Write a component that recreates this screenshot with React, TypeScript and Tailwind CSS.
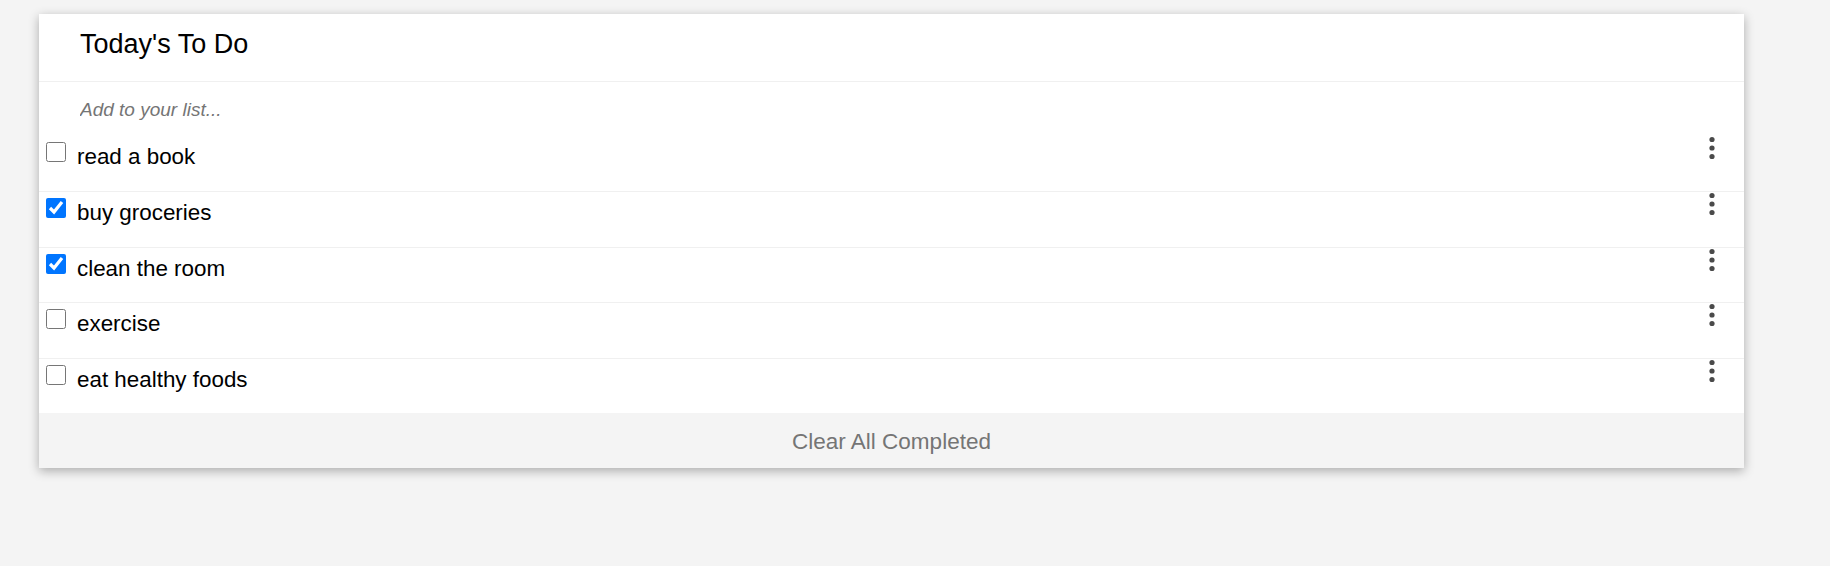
import React from 'react';

interface Todo {
  text: string;
  done: boolean;
  h: string;
}

const todos: Todo[] = [
  { text: 'read a book', done: false, h: 'h-[56px]' },
  { text: 'buy groceries', done: true, h: 'h-[56px]' },
  { text: 'clean the room', done: true, h: 'h-[55px]' },
  { text: 'exercise', done: false, h: 'h-[56px]' },
  { text: 'eat healthy foods', done: false, h: 'h-[54px]' },
];

const MoreIcon = () => (
  <svg width="6" height="24" viewBox="0 0 6 24" className="shrink-0">
    <circle cx="3" cy="3.5" r="2.6" fill="#4a4a4a" />
    <circle cx="3" cy="12" r="2.6" fill="#4a4a4a" />
    <circle cx="3" cy="20.5" r="2.6" fill="#4a4a4a" />
  </svg>
);

const TodoRow = ({ todo, last }: { todo: Todo; last: boolean }) => (
  <div
    className={`flex items-start justify-between ${todo.h} pr-[29px] ${
      last ? '' : 'border-b border-[#f0f0f0]'
    }`}
  >
    <label className="flex items-start pt-[6px]">
      <input
        type="checkbox"
        defaultChecked={todo.done}
        className="m-0 ml-[7px] w-5 h-5 accent-[#0075ff]"
      />
      <span className="ml-[11px] mt-[2px] text-[22.4px] leading-[25px] text-black">
        {todo.text}
      </span>
    </label>
    <MoreIcon />
  </div>
);

export default function App(): JSX.Element {
  return (
    <div className="min-h-[566px] bg-[#f4f4f4] pt-[14px] font-['Liberation_Sans',Arial,sans-serif]">
      <div className="ml-[39px] w-[1705px] bg-white shadow-[0_3px_10px_rgba(0,0,0,0.3)]">
        <div className="flex items-start h-[68px] pl-[41px] pt-[15px] border-b border-[#f0f0f0]">
          <h1 className="text-[27px] leading-[31px] text-black">Today's To Do</h1>
        </div>
        <div className="flex items-center h-[54px] pl-[41px] pt-[3px]">
          <input
            type="text"
            placeholder="Add to your list..."
            className="w-full italic text-[19px] outline-none placeholder:text-[#757575]"
          />
        </div>
        <div>
          {todos.map((t, i) => (
            <TodoRow key={t.text} todo={t} last={i === todos.length - 1} />
          ))}
        </div>
        <button className="w-full h-[55px] pt-[3px] bg-[#f4f4f4] text-[22.5px] text-[#757575]">
          Clear All Completed
        </button>
      </div>
    </div>
  );
}
